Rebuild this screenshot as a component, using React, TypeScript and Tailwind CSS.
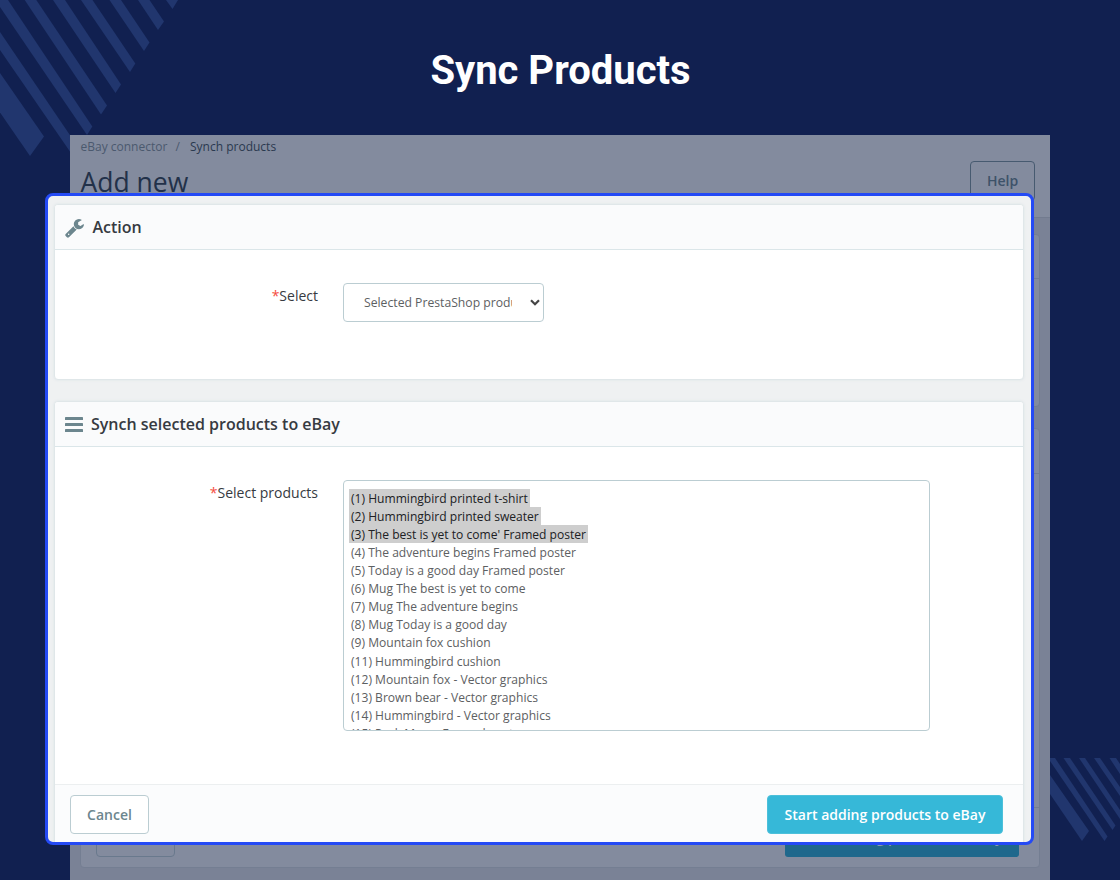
import type { ReactNode } from "react";

const products = [
  { id: 1, name: "Hummingbird printed t-shirt", selected: true },
  { id: 2, name: "Hummingbird printed sweater", selected: true },
  { id: 3, name: "The best is yet to come' Framed poster", selected: true },
  { id: 4, name: "The adventure begins Framed poster" },
  { id: 5, name: "Today is a good day Framed poster" },
  { id: 6, name: "Mug The best is yet to come" },
  { id: 7, name: "Mug The adventure begins" },
  { id: 8, name: "Mug Today is a good day" },
  { id: 9, name: "Mountain fox cushion" },
  { id: 11, name: "Hummingbird cushion" },
  { id: 12, name: "Mountain fox - Vector graphics" },
  { id: 13, name: "Brown bear - Vector graphics" },
  { id: 14, name: "Hummingbird - Vector graphics" },
  { id: 15, name: "Pack Mug + Framed poster" },
];

function Stripes() {
  return (
    <svg className="absolute inset-0" width="1120" height="880" viewBox="0 0 1120 880" fill="#21366e">
      <path d="M0 73L44 136.5L30 156L0 112.5Z" />
      <path d="M0 32L78 147L73 156L0 50Z" />
      <path d="M0 0H8L92.3 126.5L87 135L0 7Z" />
      <path d="M24.7 0H36.3L107 105.5L101 114.5Z" />
      <path d="M53 0H65L121 84.5L115.5 93Z" />
      <path d="M81 0H92.5L135.3 63.5L130 72Z" />
      <path d="M109.5 0H121L149.5 42.5L144 51Z" />
      <path d="M138 0H149.5L164 21.5L158 30Z" />
      <path d="M166 0H178L172.5 9Z" />
      <path d="M1050 775L1089 831L1082 841L1050 794Z" />
      <path d="M1050 758H1055L1107.5 836.5L1104.5 841L1050 761Z" />
      <path d="M1063.5 758H1070L1115.5 825.5L1112.5 830Z" />
      <path d="M1079 758H1085L1120 810V819Z" />
      <path d="M1094 758H1100L1120 787V796Z" />
      <path d="M1109.5 758H1116L1120 764V774Z" />
    </svg>
  );
}

function Wrench() {
  return (
    <svg className="w-[19px] h-[19px] shrink-0" viewBox="0 0 1664 1664" fill="#6c868e">
      <path d="M384 1344q0-26-19-45t-45-19-45 19-19 45 19 45 45 19 45-19 19-45zm644-420l-682 682q-37 37-90 37-52 0-91-37L59 1498q-38-36-38-90 0-53 38-91l681-681q39 98 114.500 173.500t173.500 114.500zm634-435q0 39-23 106-47 134-164.500 217.500T1216 896q-185 0-316.500-131.500T768 448t131.500-316.500T1216 0q58 0 121.500 16.500T1445 63q16 11 16 28t-16 28l-293 169v224l193 107q5-3 79-48.500t135.500-81T1630 454q15 0 23.500 10t8.500 25z" />
    </svg>
  );
}

function PanelHeader({ icon, title }: { icon: ReactNode; title: string }) {
  return (
    <div className="flex items-center h-[45px] px-[9.500px] bg-[#fafbfc] border-b border-[#dbe6e9] text-[16px] font-semibold text-[#363a41]">
      {icon}
      {title}
    </div>
  );
}

function Label({ children }: { children: ReactNode }) {
  return (
    <label className="block w-[263px] shrink-0 text-right text-[14px] leading-5 text-[#363a41]">
      <span className="text-[#f54c3e]">*</span>
      {children}
    </label>
  );
}

// dimmed page lying behind the highlighted form
function PageBehind() {
  return (
    <div className="relative mx-[70px] h-[745px] overflow-hidden bg-[#7a8296]">
      <div className="flex justify-between h-[83px] pl-[10.500px] pr-[15px] bg-[#838b9e] border-b border-[#727b8f]">
        <div>
          <div className="pt-[2px] text-[12px] leading-5 text-[#4b596e]">
            eBay connector <span className="mx-[5px]">/</span>{" "}
            <span className="ml-[2px] text-[#2a394f]">Synch products</span>
          </div>
          <div className="mt-[8px] text-[26.500px] leading-[34px] text-[#223149]">Add new</div>
        </div>
        <div className="mt-[26px] w-[65px] h-[40px] rounded-[4px] border border-[#475a70] text-center text-[14px] leading-[37px] font-semibold text-[#3d5269]">
          Help
        </div>
      </div>
      <div className="mt-[16px] ml-[10px] mr-[10px] h-[173px] rounded-[4px] bg-[#838b9e] border border-[#747e92]">
        <div className="h-[44px] border-b border-[#747e92]" />
      </div>
      <div className="mt-[21px] ml-[10px] mr-[10px] h-[440px] flex flex-col rounded-[4px] bg-[#838b9e] border border-[#747e92]">
        <div className="h-[45px] border-b border-[#747e92]" />
        <div className="flex-1" />
        <div className="flex justify-between h-[60px] pt-[9px] pl-[15px] pr-[20px] border-t border-[#747e92]">
          <div className="w-[79px] h-[40px] rounded-[4px] border border-[#69798d]" />
          <div className="w-[234px] h-[40px] rounded-[3px] bg-[#1f688c] text-center text-[14px] leading-[42px] font-semibold text-[#8c9bb0]">
            Start adding products to eBay
          </div>
        </div>
      </div>
    </div>
  );
}

export default function App() {
  return (
    <div className="relative w-[1120px] h-[880px] overflow-hidden bg-[#112050] font-['Open_Sans',sans-serif]">
      <Stripes />
      <h1 className="relative h-[135px] pt-[47px] pl-px text-center text-[40px] leading-[47px] font-bold text-white font-['Roboto',sans-serif]">
        Sync Products
      </h1>
      <PageBehind />

      <div className="absolute left-[45px] top-[193px] w-[989px] h-[652px] overflow-hidden rounded-[8px] border-[3px] border-[#244af5] bg-[#eff1f2] pl-[6px] pr-[7px] pt-[8px]">
        <section className="h-[176px] rounded-[4px] border border-[#e0e7e9] bg-white shadow-[0_0_3px_#dde5e8] overflow-hidden">
          <PanelHeader icon={<span className="flex w-[28px] pt-[2px]"><Wrench /></span>} title="Action" />
          <div className="flex pt-[33px]">
            <div className="pt-[3px]">
              <Label>Select</Label>
            </div>
            <div className="ml-[25px] flex items-center justify-between w-[201px] h-[39px] pl-[20px] pr-[3px] rounded-[4px] border border-[#bbcdd2] text-[12.200px] text-[#5d6062]">
              <span className="w-[148px] pt-[2px] overflow-hidden whitespace-nowrap">Selected PrestaShop products</span>
              <svg className="w-[10px] h-[7px]" viewBox="0 0 10 7" fill="none" stroke="#454545" strokeWidth="2.2">
                <path d="M1 1.200L5 5.200L9 1.200" />
              </svg>
            </div>
          </div>
        </section>

        <section className="mt-[21px] h-[460px] flex flex-col rounded-[4px] border border-[#e0e7e9] bg-white shadow-[0_0_3px_#dde5e8] overflow-hidden">
          <PanelHeader
            icon={
              <svg className="w-[18px] h-[15px] mt-px mr-[8.500px] shrink-0" viewBox="0 0 18 15" fill="#6c868e">
                <rect y="0" width="18" height="3" rx="0.6" />
                <rect y="6" width="18" height="3" rx="0.6" />
                <rect y="12" width="18" height="3" rx="0.6" />
              </svg>
            }
            title="Synch selected products to eBay"
          />
          <div className="flex pt-[33px]">
            <div className="pt-[3px]">
              <Label>Select products</Label>
            </div>
            <ul className="ml-[25px] w-[587px] h-[251px] overflow-hidden rounded-[4px] border border-[#bbcdd2] pl-[5px] pt-[8px] text-[12.080px] text-[#5d6062]">
              {products.map((p) => (
                <li key={p.id} className="flex h-[18.120px] leading-[19px] whitespace-nowrap">
                  <span className={p.selected ? "h-full pl-[2px] pr-[2px] bg-[#cecece] text-[#202124]" : "pl-[2px]"}>
                    ({p.id}) {p.name}
                  </span>
                </li>
              ))}
            </ul>
          </div>
          <div className="mt-[53px] flex justify-between h-[77px] pt-[10px] pl-[15px] pr-[20px] border-t border-[#eceff0] bg-[#fbfcfd]">
            <button className="w-[79px] h-[39px] rounded-[4px] border border-[#bbcdd2] bg-white text-[14px] font-semibold text-[#6c868e]">
              Cancel
            </button>
            <button className="w-[236px] h-[39px] rounded-[4px] border border-[#4cc0da] bg-[#36b8d8] text-[14px] font-semibold text-white">
              Start adding products to eBay
            </button>
          </div>
        </section>
      </div>
    </div>
  );
}
